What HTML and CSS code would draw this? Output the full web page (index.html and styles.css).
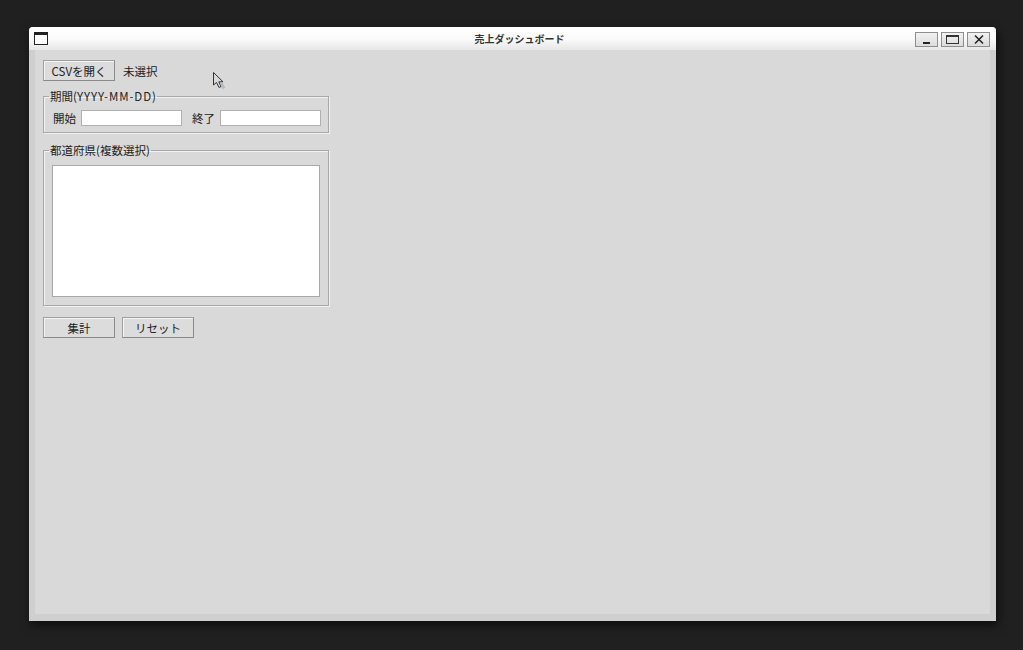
FILE: index.html
```html
<!DOCTYPE html>
<html lang="ja">
<head>
<meta charset="utf-8">
<title>売上ダッシュボード</title>
<link rel="stylesheet" href="styles.css">
</head>
<body>
<div class="desktop">
  <div class="window">
    <div class="titlebar">
      <div class="sysicon"></div>
      <div class="title">売上ダッシュボード</div>
      <div class="winbtns">
        <div class="wbtn"><span class="min"></span></div>
        <div class="wbtn"><span class="max"></span></div>
        <div class="wbtn">
          <svg width="10" height="9" viewBox="0 0 10 9"><path d="M1 0.5 L9 8.5 M9 0.5 L1 8.5" stroke="#222" stroke-width="1.5"/></svg>
        </div>
      </div>
    </div>
    <div class="client">
      <div class="content">
        <div class="row top">
          <div class="btn btn-csv">CSVを開く</div>
          <span class="label">未選択</span>
        </div>
        <fieldset class="group period">
          <legend>期間(<span class="latin">YYYY-MM-DD</span>)</legend>
          <div class="row fields">
            <span class="label">開始</span>
            <div class="entry"></div>
            <span class="label end">終了</span>
            <div class="entry"></div>
          </div>
        </fieldset>
        <fieldset class="group pref">
          <legend>都道府県(複数選択)</legend>
          <div class="listbox"></div>
        </fieldset>
        <div class="row actions">
          <div class="btn">集計</div>
          <div class="btn">リセット</div>
        </div>
      </div>
      <svg class="cursor" width="14" height="20" viewBox="0 0 14 20">
        <path d="M1.5 1.5 L1.5 14 L4.5 11.5 L7 16.5 L9 15.5 L6.8 10.8 L11 10.8 Z" fill="#d9d9d9" stroke="#333" stroke-width="1"/>
        <path d="M9 12 L12 17.5" stroke="#aab0b6" stroke-width="3" opacity="0.7"/>
      </svg>
    </div>
  </div>
</div>
</body>
</html>
```
FILE: styles.css
```css
html, body {
  margin: 0;
  padding: 0;
  background: #202020;
  font-family: "Noto Sans CJK JP", "Noto Sans", sans-serif;
  font-size: 11.5px;
  color: #222;
}
.desktop {
  width: 1023px;
  height: 650px;
  padding: 27px 0 0 29px;
  box-sizing: border-box;
}
.window {
  width: 967px;
  height: 594px;
  display: flex;
  flex-direction: column;
  border-radius: 4px 4px 0 0;
  overflow: hidden;
  box-shadow: 2px 4px 10px rgba(0,0,0,0.6);
  background: #cfcfcf;
}
.titlebar {
  height: 23px;
  flex: none;
  display: flex;
  align-items: center;
  position: relative;
  background: linear-gradient(#ffffff 0%, #fbfbfb 50%, #e6e6e6 100%);
}
.sysicon {
  width: 12px;
  height: 9px;
  border: 1px solid #222;
  border-top-width: 3px;
  margin-left: 5px;
  background: #fff;
}
.title {
  position: absolute;
  left: 14px;
  right: 0;
  text-align: center;
  font-weight: bold;
  font-size: 10px;
  color: #333;
  top: 4px;
}
.winbtns {
  margin-left: auto;
  margin-right: 6px;
  display: flex;
  gap: 3px;
  margin-top: 2px;
}
.wbtn {
  width: 21px;
  height: 13px;
  border: 1px solid #8e8e8e;
  background: linear-gradient(#f2f2f2, #dcdcdc);
  display: flex;
  align-items: center;
  justify-content: center;
  position: relative;
}
.min {
  width: 7px;
  height: 2px;
  background: #222;
  margin-top: 7px;
}
.max {
  width: 11px;
  height: 6px;
  border: 1px solid #333;
  border-top-width: 2px;
}
.client {
  flex: 1;
  margin: 0 6px 7px 6px;
  background: #d9d9d9;
  position: relative;
}
.content {
  padding: 10px 0 0 8px;
  display: flex;
  flex-direction: column;
  width: 286px;
}
.row {
  display: flex;
  align-items: center;
}
.top {
  gap: 8px;
}
.btn {
  width: 70px;
  height: 19px;
  border: 1px solid #a0a0a0;
  border-right-color: #8a8a8a;
  border-bottom-color: #8a8a8a;
  background: #dcdcdc;
  box-shadow: inset 1px 1px 0 #f4f4f4;
  display: flex;
  align-items: center;
  justify-content: center;
  color: #222;
}
.label {
  color: #222;
}
.group {
  margin: 0;
  border: 1px solid #a8a8a8;
  box-shadow: 1px 1px 0 #f2f2f2 inset, 1px 1px 0 #f2f2f2;
  min-width: 0;
}
.group legend {
  padding: 0 1px;
  margin-left: 5px;
  color: #222;
  line-height: 14px;
}
.latin {
  letter-spacing: 0.9px;
}
.period {
  margin-top: 8px;
  padding: 7px 0 6px 0;
}
.fields {
  padding: 0 0 0 9px;
}
.entry {
  width: 99px;
  height: 14px;
  background: #fff;
  border: 1px solid #b0b0b0;
  margin-left: 5px;
}
.end {
  margin-left: 10px;
}
.pref {
  margin-top: 10px;
  padding: 8px 0 8px 0;
}
.listbox {
  margin-left: 8px;
  width: 266px;
  height: 130px;
  background: #fff;
  border: 1px solid #a8a8a8;
}
.actions {
  margin-top: 11px;
  gap: 7px;
}
.cursor {
  position: absolute;
  left: 177px;
  top: 21px;
}
```
